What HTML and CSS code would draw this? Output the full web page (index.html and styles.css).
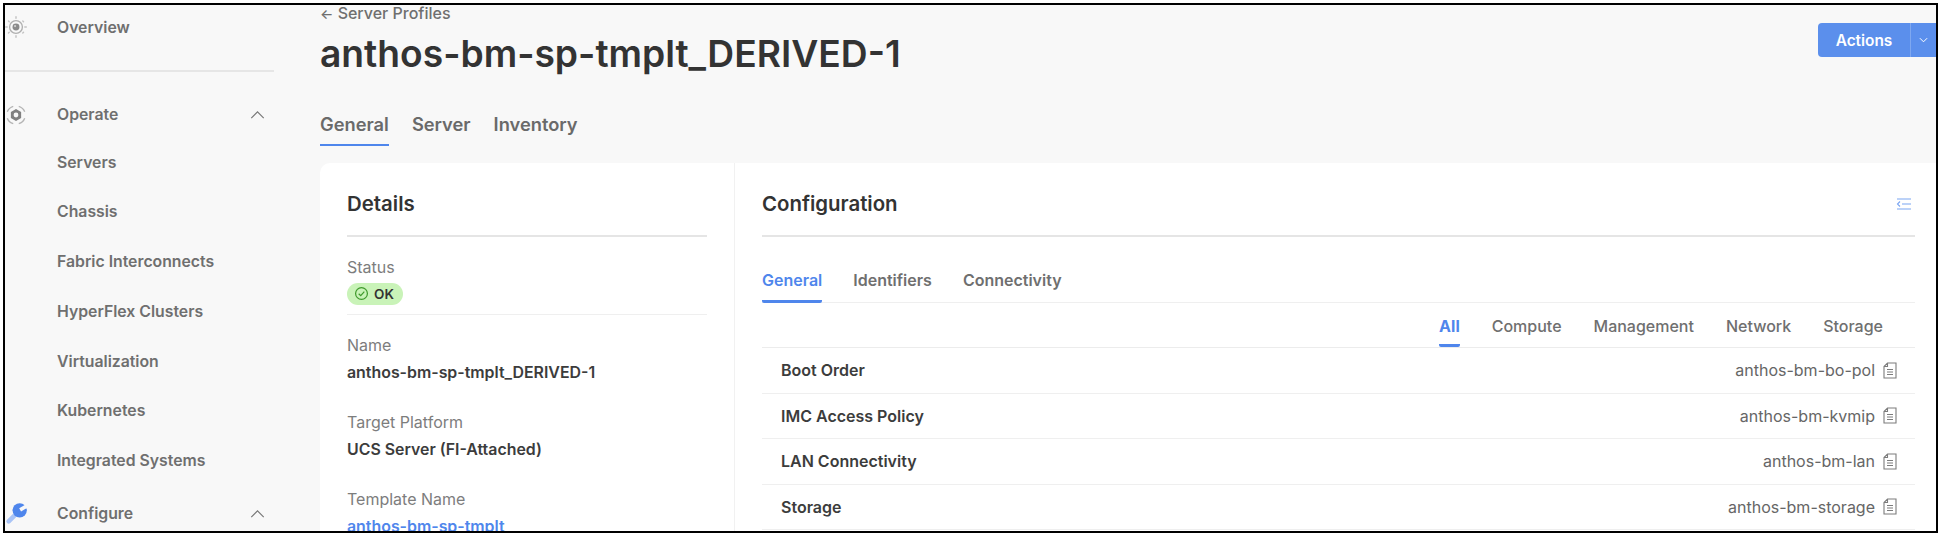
FILE: index.html
```html
<!DOCTYPE html>
<html lang="en">
<head>
<meta charset="utf-8">
<title>Server Profile</title>
<link rel="stylesheet" href="styles.css">
</head>
<body>
<div class="frame">
  <aside class="sidebar">
    <div class="nav-head nav-overview">
      <svg class="nav-icon" viewBox="0 0 24 24" fill="none"><circle cx="12" cy="12" r="7" stroke="#b0b0b0" stroke-width="1.500"/><circle cx="12" cy="12" r="3.800" fill="#8a8a8a"/><circle cx="11" cy="11" r="1.200" fill="#d0d0d0"/><g stroke="#c4c4c4" stroke-width="1.600" stroke-linecap="round"><path d="M12 .8v1.600M12 21.600v1.600M.8 12h1.600M21.600 12h1.600M3.800 5.500l.8.8M19.400 5.500l.8.8M3.800 18.500l.8-.8M19.400 18.500l.8-.8"/></g></svg>
      <span>Overview</span>
    </div>
    <div class="nav-divider"></div>
    <div class="nav-head nav-operate">
      <svg class="nav-icon" viewBox="0 0 24 24" fill="none"><path d="M12 5.500l5.600 3.200v6.600L12 18.500l-5.600-3.200V8.700z" fill="#808080"/><circle cx="12" cy="12" r="2.600" fill="#f8f8f8"/><path d="M2.500 8.500A10 10 0 0 1 9 2.500M15 2.500a10 10 0 0 1 6.500 6M21.500 15.500a10 10 0 0 1-6.500 6M9 21.500a10 10 0 0 1-6.500-6" stroke="#b5b5b5" stroke-width="1.500"/></svg>
      <span class="nav-label">Operate</span>
      <svg class="chev" viewBox="0 0 16 9" fill="none"><path d="M1 8l7-7 7 7" stroke="#777" stroke-width="1.300"/></svg>
    </div>
    <ul class="nav-list">
      <li>Servers</li>
      <li>Chassis</li>
      <li>Fabric Interconnects</li>
      <li>HyperFlex Clusters</li>
      <li>Virtualization</li>
      <li>Kubernetes</li>
      <li>Integrated Systems</li>
    </ul>
    <div class="nav-head nav-configure">
      <svg class="nav-icon" viewBox="0 0 24 24" fill="none"><path d="M10 14L4 20" stroke="#a9c4f6" stroke-width="5" stroke-linecap="round"/><circle cx="16" cy="8" r="7.800" fill="#4f86ec"/><path d="M16.500 7.500L24 3" stroke="#f8f8f8" stroke-width="4"/></svg>
      <span class="nav-label">Configure</span>
      <svg class="chev" viewBox="0 0 16 9" fill="none"><path d="M1 8l7-7 7 7" stroke="#777" stroke-width="1.300"/></svg>
    </div>
  </aside>
  <main class="main">
    <header class="page-head">
      <div class="page-title-block">
        <div class="crumb"><span class="crumb-arrow">←</span> Server Profiles</div>
        <h1>anthos-bm-sp-tmplt_DERIVED-1</h1>
      </div>
      <div class="actions">
        <span class="actions-main">Actions</span>
        <span class="actions-drop"><svg viewBox="0 0 10 6" fill="none"><path d="M1 1l4 4 4-4" stroke="#fff" stroke-width="1.100"/></svg></span>
      </div>
    </header>
    <nav class="page-tabs">
      <span class="page-tab active">General</span>
      <span class="page-tab">Server</span>
      <span class="page-tab">Inventory</span>
    </nav>
    <div class="cards">
      <section class="card details">
        <h2 class="card-title">Details</h2>
        <div class="field field-status">
          <div class="field-label">Status</div>
          <span class="pill"><svg viewBox="0 0 16 16" fill="none"><circle cx="8" cy="8" r="6.300" stroke="#3f9a2c" stroke-width="1.300"/><path d="M5 8.200l2.200 2.100L11 6" stroke="#3f9a2c" stroke-width="1.300"/></svg>OK</span>
        </div>
        <div class="field">
          <div class="field-label">Name</div>
          <div class="field-value">anthos-bm-sp-tmplt_DERIVED-1</div>
        </div>
        <div class="field">
          <div class="field-label">Target Platform</div>
          <div class="field-value">UCS Server (FI-Attached)</div>
        </div>
        <div class="field">
          <div class="field-label">Template Name</div>
          <div class="field-value link">anthos-bm-sp-tmplt</div>
        </div>
      </section>
      <section class="card config">
        <div class="config-head">
          <h2 class="card-title">Configuration</h2>
          <svg class="collapse" viewBox="0 0 15 12" fill="none"><path d="M1 1h14M6 6h9M1 11h14" stroke="#7aa5f2" stroke-width="1.200"/><path d="M4 3.500L1.500 6 4 8.500" stroke="#7aa5f2" stroke-width="1.100"/></svg>
        </div>
        <div class="config-tabs">
          <span class="config-tab active">General</span>
          <span class="config-tab">Identifiers</span>
          <span class="config-tab">Connectivity</span>
        </div>
        <div class="sub-tabs">
          <span class="sub-tab active">All</span>
          <span class="sub-tab">Compute</span>
          <span class="sub-tab">Management</span>
          <span class="sub-tab">Network</span>
          <span class="sub-tab">Storage</span>
        </div>
        <div class="row"><span class="row-label">Boot Order</span><span class="row-value">anthos-bm-bo-pol<svg class="doc" viewBox="0 0 14 17" fill="none"><path d="M4.500 1H13v15H1V4.500zM4.500 1v3.500H1M4 7.500h6M4 10h6M4 12.500h6" stroke="#7c7c7c" stroke-width="1.100"/></svg></span></div>
        <div class="row"><span class="row-label">IMC Access Policy</span><span class="row-value">anthos-bm-kvmip<svg class="doc" viewBox="0 0 14 17" fill="none"><path d="M4.500 1H13v15H1V4.500zM4.500 1v3.500H1M4 7.500h6M4 10h6M4 12.500h6" stroke="#7c7c7c" stroke-width="1.100"/></svg></span></div>
        <div class="row"><span class="row-label">LAN Connectivity</span><span class="row-value">anthos-bm-lan<svg class="doc" viewBox="0 0 14 17" fill="none"><path d="M4.500 1H13v15H1V4.500zM4.500 1v3.500H1M4 7.500h6M4 10h6M4 12.500h6" stroke="#7c7c7c" stroke-width="1.100"/></svg></span></div>
        <div class="row"><span class="row-label">Storage</span><span class="row-value">anthos-bm-storage<svg class="doc" viewBox="0 0 14 17" fill="none"><path d="M4.500 1H13v15H1V4.500zM4.500 1v3.500H1M4 7.500h6M4 10h6M4 12.500h6" stroke="#7c7c7c" stroke-width="1.100"/></svg></span></div>
      </section>
    </div>
  </main>
</div>
</body>
</html>
```
FILE: styles.css
```css
* { box-sizing: border-box; }
html, body { margin: 0; padding: 0; background: #fff; }
body { padding: 3px; font-family: Inter, "Liberation Sans", sans-serif; }
.frame {
  width: 1935px;
  height: 530px;
  border: 2px solid #000;
  background: #f8f8f8;
  display: flex;
  overflow: hidden;
}
.sidebar {
  width: 315px;
  flex: none;
  color: #6f6f6f;
  font-size: 15.800px;
  font-weight: 600;
}
.nav-head { display: flex; align-items: center; height: 24px; }
.nav-overview { margin-top: 10px; }
.nav-icon { width: 22px; height: 22px; flex: none; }
.nav-head span { margin-left: 30px; }
.nav-label { width: 193px; }
.chev { width: 15px; height: 8px; }
.nav-divider { height: 1.500px; background: #e6e6e6; width: 269px; margin: 31px 0 31px; }
.nav-list { list-style: none; margin: 1px 0 0; padding: 0 0 0 52px; }
.nav-list li { height: 49.800px; line-height: 20px; padding-top: 25px; }
.nav-configure { margin-top: 25.500px; }
.main { flex: 1; min-width: 0; }
.page-head { display: flex; justify-content: space-between; height: 72px; }
.page-title-block { flex: none; }
.crumb { font-size: 16px; font-weight: 500; color: #6f6f6f; line-height: 17px; }
.crumb-arrow { font-size: 14px; }
h1 { margin: 10px 0 0; font-size: 37.200px; line-height: 44px; font-weight: 600; color: #333; }
.actions { display: flex; height: 34px; margin-top: 18px; color: #fff; font-size: 15.400px; font-weight: 600; background: #5b8fec; border-radius: 4px 0 0 4px; width: 118px; flex: none; }
.actions-main { width: 93px; display: flex; align-items: center; justify-content: center; border-right: 1px solid #7fa8f0; }
.actions-drop { flex: 1; display: flex; align-items: center; justify-content: center; }
.actions-drop svg { width: 9px; height: 6px; }
.page-tabs { display: flex; gap: 23px; height: 101px; margin-top: -15px; padding-top: 52px; }
.page-tab { font-size: 18.300px; font-weight: 600; color: #6a6a6a; height: 32px; line-height: 20px; }
.page-tab.active { border-bottom: 2px solid #4f86ec; }
.cards { display: flex; }
.card { background: #fff; height: 380px; }
.details { width: 415px; border-radius: 10px 0 0 0; padding: 0 27px 0 27px; border-right: 1px solid #f1f1f1; }
.config { flex: 1; padding: 0 21px 0 27px; }
.card-title { margin: 0; font-size: 20.400px; font-weight: 600; color: #333; height: 74px; line-height: 24px; padding-top: 29px; border-bottom: 2px solid #e5e5e5; }
.field { padding-top: 21px; }
.field-status { height: 78px; border-bottom: 1.500px solid #efefef; }
.field-label { font-size: 16px; font-weight: 400; color: #7d7d7d; line-height: 18px; margin-bottom: 9px; }
.field-value { font-size: 15.900px; font-weight: 600; color: #3c3c3c; line-height: 20px; height: 29px; }
.link { color: #4f86ec; text-decoration: underline; }
.pill { display: inline-flex; align-items: center; gap: 5px; height: 22px; width: 56px; border-radius: 11px; background: #c9f3b8; padding-left: 7px; font-size: 13.500px; font-weight: 600; color: #333; margin-top: -4px; }
.pill svg { width: 15px; height: 15px; }
.config-head { position: relative; }
.collapse { position: absolute; right: 4px; top: 35px; width: 15px; height: 12px; }
.config-tabs { display: flex; gap: 31px; height: 66px; padding-top: 33px; border-bottom: 1.500px solid #efefef; }
.config-tab { font-size: 16px; font-weight: 600; color: #6f6f6f; height: 33px; line-height: 20px; }
.config-tab.active { color: #4f86ec; border-bottom: 3px solid #4f86ec; border-radius: 2px; }
.sub-tabs { display: flex; justify-content: flex-end; gap: 32px; height: 45px; padding: 12px 32px 0 0; border-bottom: 1.500px solid #ececec; }
.sub-tab { font-size: 16px; font-weight: 500; color: #6f6f6f; height: 32px; line-height: 22px; }
.sub-tab.active { color: #4f86ec; font-weight: 700; border-bottom: 3px solid #4f86ec; border-radius: 2px; }
.row { display: flex; justify-content: space-between; align-items: center; height: 45.500px; padding: 0 18px 0 19px; border-bottom: 1.500px solid #efefef; }
.row-label { font-size: 16px; font-weight: 600; color: #3c3c3c; }
.row-value { display: flex; align-items: center; font-size: 16px; color: #666; }
.doc { width: 14px; height: 17px; margin-left: 8px; }
```
